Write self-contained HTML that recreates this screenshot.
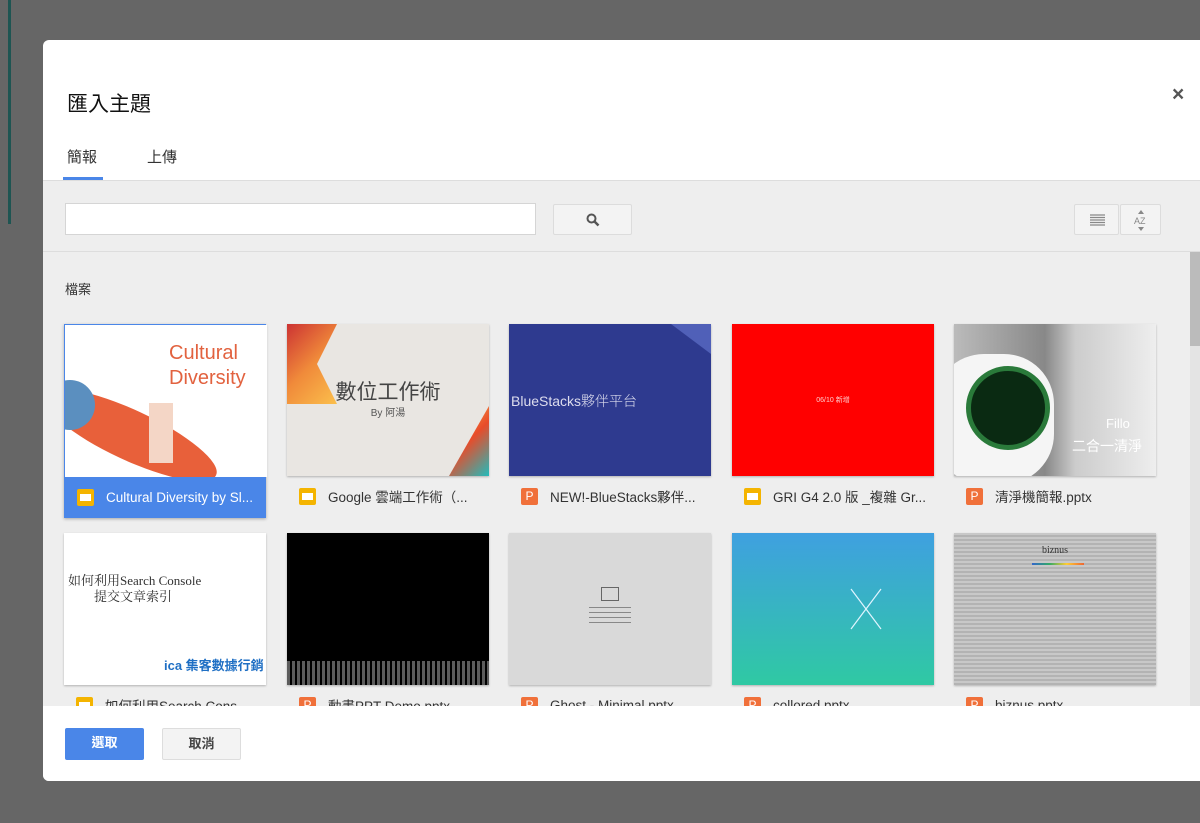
<!DOCTYPE html>
<html><head><meta charset="utf-8"><style>
*{margin:0;padding:0;box-sizing:border-box}
body{width:1200px;height:823px;background:#666;overflow:hidden;position:relative;font-family:"Liberation Sans","Noto Sans CJK TC",sans-serif}
.teal{position:absolute;left:8px;top:0;width:3px;height:224px;background:#1e5552}
.dlg{position:absolute;left:43px;top:40px;width:1170px;height:741px;background:#fff;border-radius:6px;overflow:hidden}
.title{position:absolute;left:24px;top:48px;font-size:21px;color:#111;font-weight:400}
.close{position:absolute;left:1129px;top:43px;font-size:21px;color:#555;font-weight:bold}
.tab{position:absolute;top:106px;font-size:15px;color:#333}
.tabline{position:absolute;left:20px;top:137px;width:40px;height:3px;background:#4a86e8}
.gray{position:absolute;left:0;top:140px;width:1170px;height:566px;background:#eee;border-top:1px solid #ddd}
.search{position:absolute;left:22px;top:22px;width:471px;height:32px;background:#fff;border:1px solid #d5d5d5}
.btn{position:absolute;background:#f3f3f3;border:1px solid #dcdcdc;border-radius:2px}
.sep{position:absolute;left:0;top:70px;width:1170px;border-top:1px solid #ddd}
.lbl{position:absolute;left:22px;top:98px;font-size:13px;color:#333}
.card{position:absolute;width:202px}
.th{width:202px;height:152px;overflow:hidden;position:relative;box-shadow:0 1px 2px rgba(0,0,0,.25)}
.name{height:40px;display:flex;align-items:center;padding-left:12px;font-size:13.5px;color:#333;white-space:nowrap}
.ic{width:17px;height:17px;border-radius:2px;margin-right:12px;flex:none;position:relative}
.ys{background:#f4b400}.ys:after{content:"";position:absolute;left:3px;top:5px;width:11px;height:7px;background:#fff}
.pp{background:#f0703a;color:#fff;font-size:12px;text-align:center;line-height:17px}
.sel{background:#4a86e8;border:1px solid #4a86e8;box-shadow:0 1px 3px rgba(0,0,0,.3)}
.sel .name{color:#fff}
.scroll{position:absolute;left:1147px;top:71px;width:10px;height:495px;background:#e4e4e4}
.thumb{position:absolute;left:0;top:0;width:10px;height:94px;background:#bbb}
.foot{position:absolute;left:0;width:1170px}
.fb{position:absolute;top:688px;height:32px;font-size:13px;font-weight:bold;text-align:center;line-height:30px;border-radius:2px}
</style></head><body>
<div class="teal"></div>
<div class="dlg">
 <div class="title">匯入主題</div>
 <div class="close">×</div>
 <div class="tab" style="left:24px">簡報</div>
 <div class="tab" style="left:104px">上傳</div>
 <div class="tabline"></div>
 <div class="gray">
  <div class="search"></div>
  <div class="btn" style="left:510px;top:23px;width:79px;height:31px">
   <svg width="79" height="31"><circle cx="37.5" cy="13.5" r="4" fill="none" stroke="#555" stroke-width="2"/><path d="M40.5 16.5l4 4" stroke="#555" stroke-width="2.5"/></svg></div>
  <div class="btn" style="left:1031px;top:23px;width:45px;height:31px">
   <svg width="45" height="31"><path d="M15 10h15M15 12.5h15M15 15h15M15 17.5h15M15 20h15" stroke="#888" stroke-width="1.3"/></svg></div>
  <div class="btn" style="left:1077px;top:23px;width:41px;height:31px">
   <svg width="41" height="31"><path d="M20 5l-3 4h6z M20 26l-3-4h6z" fill="#888"/><text x="13" y="19" font-size="9" fill="#888" font-family="Liberation Sans">AZ</text></svg></div>
  <div class="sep"></div>
  <div class="lbl">檔案</div>
  <div class="scroll"><div class="thumb"></div></div>
 </div>

 <div class="card sel" style="left:21px;top:284px">
  <div class="th" style="background:#fff;box-shadow:none">
   <div style="position:absolute;left:104px;top:16px;color:#e2623f;font-size:20px;line-height:25px">Cultural<br>Diversity</div>
   <div style="position:absolute;left:-30px;top:85px;width:190px;height:50px;background:#e8603a;border-radius:50%;transform:rotate(25deg)"></div>
   <div style="position:absolute;left:-20px;top:55px;width:50px;height:50px;background:#5b8fbf;border-radius:50%"></div>
   <div style="position:absolute;left:84px;top:78px;width:24px;height:60px;background:#f4d6c6"></div>
  </div>
  <div class="name"><span class="ic ys"></span>Cultural Diversity by Sl...</div>
 </div>
 <div class="card" style="left:244px;top:284px">
  <div class="th" style="background:#e9e6e2">
   <div style="position:absolute;left:0;top:0;width:50px;height:80px;background:linear-gradient(135deg,#c33 0,#f08a3a 50%,#fbbf4c 100%);clip-path:polygon(0 0,100% 0,60% 50%,100% 100%,0 100%)"></div>
   <div style="position:absolute;right:0;bottom:0;width:40px;height:70px;background:linear-gradient(135deg,#fbbf4c,#e84c2a,#2bb);clip-path:polygon(100% 0,100% 100%,0 100%,50% 50%)"></div>
   <div style="position:absolute;left:0;width:202px;top:52px;text-align:center;font-size:21px;color:#444">數位工作術</div>
   <div style="position:absolute;left:0;width:202px;top:80px;text-align:center;font-size:10px;color:#555">By 阿湯</div>
  </div>
  <div class="name"><span class="ic ys"></span>Google 雲端工作術（...</div>
 </div>
 <div class="card" style="left:466px;top:284px">
  <div class="th" style="background:#2e3a8f">
   <div style="position:absolute;right:0;top:0;width:40px;height:30px;background:#5060b8;clip-path:polygon(0 0,100% 0,100% 100%)"></div>
   <div style="position:absolute;left:2px;top:67px;font-size:14px;color:#dde;font-weight:300">BlueStacks夥伴平台</div>
  </div>
  <div class="name"><span class="ic pp">P</span>NEW!-BlueStacks夥伴...</div>
 </div>
 <div class="card" style="left:689px;top:284px">
  <div class="th" style="background:#f00"><div style="position:absolute;width:202px;top:71px;text-align:center;color:#fcc;font-size:7px">06/10 新增</div></div>
  <div class="name"><span class="ic ys"></span>GRI G4 2.0 版 _複雜 Gr...</div>
 </div>
 <div class="card" style="left:911px;top:284px">
  <div class="th" style="background:linear-gradient(90deg,#bbb,#888 45%,#ccc 60%,#eee)">
   <div style="position:absolute;left:-20px;top:30px;width:120px;height:130px;background:#f5f5f5;border-radius:50px"></div>
   <div style="position:absolute;left:12px;top:42px;width:84px;height:84px;background:#0a2a12;border:5px solid #2a7a3a;border-radius:50%"></div>
   <div style="position:absolute;left:152px;top:92px;color:#fff;font-size:13px">Fillo</div>
   <div style="position:absolute;left:118px;top:112px;color:#fff;font-size:14px">二合一清淨</div>
  </div>
  <div class="name"><span class="ic pp">P</span>清淨機簡報.pptx</div>
 </div>

 <div class="card" style="left:21px;top:493px">
  <div class="th" style="background:#fff">
   <div style="position:absolute;left:4px;top:40px;font-family:'Liberation Serif','Noto Serif CJK SC',serif;font-size:13px;color:#333;line-height:16px">如何利用Search Console<br>&nbsp;&nbsp;&nbsp;&nbsp;&nbsp;&nbsp;&nbsp;&nbsp;提交文章索引</div>
   <div style="position:absolute;left:100px;top:122px;color:#1f6fc4;font-size:13px;font-weight:bold;white-space:nowrap">ica 集客數據行銷</div>
  </div>
  <div class="name"><span class="ic ys"></span>如何利用Search Cons...</div>
 </div>
 <div class="card" style="left:244px;top:493px">
  <div class="th" style="background:#000"><div style="position:absolute;left:0;top:128px;width:202px;height:24px;background:repeating-linear-gradient(90deg,#999 0 3px,#000 3px 5px);opacity:.6"></div></div>
  <div class="name"><span class="ic pp">P</span>動畫PPT Demo.pptx</div>
 </div>
 <div class="card" style="left:466px;top:493px">
  <div class="th" style="background:#d9d9d9"><div style="position:absolute;left:92px;top:54px;width:18px;height:14px;border:1px solid #666"></div><div style="position:absolute;left:80px;top:72px;width:42px;height:22px;background:repeating-linear-gradient(#d9d9d9 0 2px,#888 2px 3px,#d9d9d9 3px 5px)"></div></div>
  <div class="name"><span class="ic pp">P</span>Ghost - Minimal.pptx</div>
 </div>
 <div class="card" style="left:689px;top:493px">
  <div class="th" style="background:linear-gradient(#3fa0e0,#2fc9a3)"><svg width="202" height="152"><path d="M119 56l30 40M149 56l-30 40" stroke="#e0f5ff" stroke-width="1.2"/></svg></div>
  <div class="name"><span class="ic pp">P</span>collored.pptx</div>
 </div>
 <div class="card" style="left:911px;top:493px">
  <div class="th" style="background:repeating-linear-gradient(#c8c8c8 0 2px,#b3b3b3 2px 4px)"><div style="position:absolute;width:202px;top:12px;text-align:center;font-family:'Liberation Serif',serif;font-size:10px;color:#333">biznus</div><div style="position:absolute;left:78px;top:30px;width:52px;height:2px;background:linear-gradient(90deg,#36c,#3a6,#fc3,#e63)"></div></div>
  <div class="name"><span class="ic pp">P</span>biznus.pptx</div>
 </div>

 <div class="foot" style="top:666px;height:75px;background:#fff"></div>
 <div class="fb" style="left:22px;width:79px;background:#4a86e8;color:#fff">選取</div>
 <div class="fb" style="left:119px;width:79px;background:#f3f3f3;color:#444;border:1px solid #ddd">取消</div>
</div>
</body></html>
